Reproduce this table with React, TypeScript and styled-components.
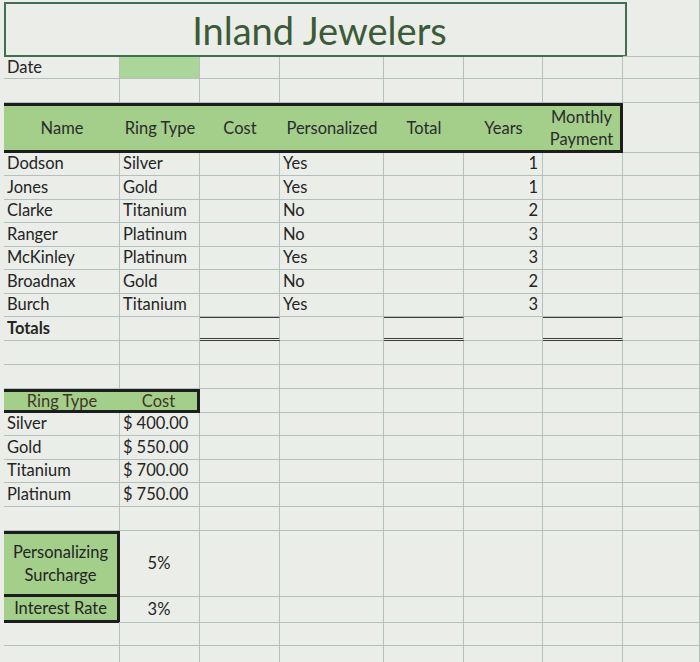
import * as React from 'react'
import styled, { createGlobalStyle } from 'styled-components'

const GRID = '#b3c1bc'
const INK = '#242424'
const EDGE = '#1d1d1d'
const GREEN = '#a3cf8b'
const COLS = '116px 80px 80px 104px 80px 79px 80px 1fr'

const GlobalStyle = createGlobalStyle`
  body {
    margin: 0;
    background: #ebede8;
    font-family: Lato, "Open Sans", sans-serif;
  }
`

const Sheet = styled.div`
  width: 700px;
  height: 662px;
  overflow: hidden;
  padding-left: 4px;
  box-sizing: border-box;
  background: #ebede8;
  color: ${INK};
  font-size: 16.5px;
`

const Row = styled.div<{ $h: number }>`
  display: grid;
  grid-template-columns: ${COLS};
  height: ${p => p.$h}px;
`

type CellProps = {
  $align?: 'left' | 'center' | 'right'
  $fill?: string
  $bold?: boolean
  $total?: boolean
}

const Cell = styled.div<CellProps>`
  display: flex;
  align-items: center;
  justify-content: ${p =>
    p.$align === 'center' ? 'center' : p.$align === 'right' ? 'flex-end' : 'flex-start'};
  padding: 0 4px 2px 3px;
  box-sizing: border-box;
  white-space: nowrap;
  line-height: 18px;
  background: ${p => p.$fill || 'transparent'};
  font-weight: ${p => (p.$bold ? 700 : 400)};
  border-right: 1px solid ${GRID};
  border-bottom: 1px solid ${GRID};
  ${p =>
    p.$total &&
    `
    border-top: 1px solid #3a3a3a;
    border-bottom: 3px double #3a3a3a;
  `}
`

const TitleBox = styled.div`
  grid-column: span 7;
  margin: 2px -4px 0 0;
  border: 2px solid #41704f;
  display: flex;
  align-items: center;
  justify-content: center;
  font-size: 38px;
  color: #3b5a38;
  padding-left: 8px;
`

const HeaderBand = styled.div<{ $span: number; $cols: string }>`
  grid-column: span ${p => p.$span};
  display: grid;
  grid-template-columns: ${p => p.$cols};
  box-sizing: border-box;
  background: ${GREEN};
  border-top: 3px solid ${EDGE};
  border-bottom: 3px solid ${EDGE};
  border-right: 3px solid ${EDGE};
`

const HeaderLabel = styled.div<{ $tone?: string; $lh?: number }>`
  display: flex;
  align-items: center;
  justify-content: center;
  text-align: center;
  line-height: ${p => p.$lh || 22}px;
  color: ${p => p.$tone || '#2b2b2b'};
`

const BoxCell = styled.div<{ $first?: boolean }>`
  display: flex;
  align-items: center;
  justify-content: center;
  text-align: center;
  line-height: 23px;
  background: ${GREEN};
  border: 3px solid ${EDGE};
  border-left: none;
  border-top: ${p => (p.$first ? `3px solid ${EDGE}` : 'none')};
`

const Money = styled(Cell)`
  justify-content: flex-start;
  gap: 4px;
`

type Order = [string, string, string, number]

const orders: Order[] = [
  ['Dodson', 'Silver', 'Yes', 1],
  ['Jones', 'Gold', 'Yes', 1],
  ['Clarke', 'Titanium', 'No', 2],
  ['Ranger', 'Platinum', 'No', 3],
  ['McKinley', 'Platinum', 'Yes', 3],
  ['Broadnax', 'Gold', 'No', 2],
  ['Burch', 'Titanium', 'Yes', 3],
]
const orderHeights = [23, 24, 23, 24, 23, 24, 23]

const prices: [string, string][] = [
  ['Silver', '400.00'],
  ['Gold', '550.00'],
  ['Titanium', '700.00'],
  ['Platinum', '750.00'],
]
const priceHeights = [23, 24, 23, 24]

function blanks(n: number) {
  return Array.from({ length: n }, (_, i) => <Cell key={'b' + i} />)
}

function App(): JSX.Element {
  return (
    <Sheet>
      <GlobalStyle />
      <Row $h={57}>
        <TitleBox>Inland Jewelers</TitleBox>
        <Cell />
      </Row>
      <Row $h={22}>
        <Cell>Date</Cell>
        <Cell $fill="#acd59a" />
        {blanks(6)}
      </Row>
      <Row $h={24}>{blanks(8)}</Row>
      <Row $h={50}>
        <HeaderBand $span={7} $cols="116px 80px 80px 104px 80px 79px 1fr">
          <HeaderLabel>Name</HeaderLabel>
          <HeaderLabel>Ring Type</HeaderLabel>
          <HeaderLabel>Cost</HeaderLabel>
          <HeaderLabel>Personalized</HeaderLabel>
          <HeaderLabel>Total</HeaderLabel>
          <HeaderLabel>Years</HeaderLabel>
          <HeaderLabel>
            Monthly
            <br />
            Payment
          </HeaderLabel>
        </HeaderBand>
        <Cell />
      </Row>
      {orders.map(([name, ring, pers, years], i) => (
        <Row key={name} $h={orderHeights[i]}>
          <Cell>{name}</Cell>
          <Cell>{ring}</Cell>
          <Cell />
          <Cell>{pers}</Cell>
          <Cell />
          <Cell $align="right">{years}</Cell>
          <Cell />
          <Cell />
        </Row>
      ))}
      <Row $h={24}>
        <Cell $bold>Totals</Cell>
        <Cell />
        <Cell $total />
        <Cell />
        <Cell $total />
        <Cell />
        <Cell $total />
        <Cell />
      </Row>
      <Row $h={24}>{blanks(8)}</Row>
      <Row $h={24}>{blanks(8)}</Row>
      <Row $h={24}>
        <HeaderBand $span={2} $cols="116px 1fr">
          <HeaderLabel $tone="#3f3526" $lh={18}>
            Ring Type
          </HeaderLabel>
          <HeaderLabel $tone="#3f3526" $lh={18}>
            Cost
          </HeaderLabel>
        </HeaderBand>
        {blanks(6)}
      </Row>
      {prices.map(([ring, cost], i) => (
        <Row key={ring} $h={priceHeights[i]}>
          <Cell>{ring}</Cell>
          <Money>
            <span>$</span>
            <span>{cost}</span>
          </Money>
          {blanks(6)}
        </Row>
      ))}
      <Row $h={24}>{blanks(8)}</Row>
      <Row $h={66}>
        <BoxCell $first>
          Personalizing
          <br />
          Surcharge
        </BoxCell>
        <Cell $align="center">5%</Cell>
        {blanks(6)}
      </Row>
      <Row $h={25}>
        <BoxCell>Interest Rate</BoxCell>
        <Cell $align="center">3%</Cell>
        {blanks(6)}
      </Row>
      <Row $h={24}>{blanks(8)}</Row>
      <Row $h={24}>{blanks(8)}</Row>
    </Sheet>
  )
}

export default App
